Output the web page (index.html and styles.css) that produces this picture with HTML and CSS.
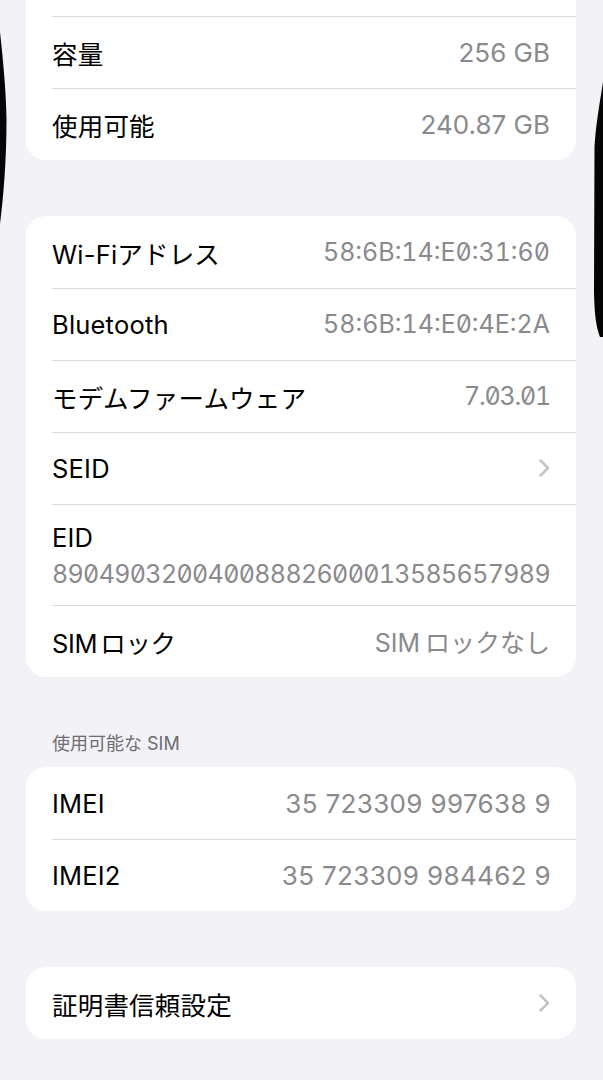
FILE: index.html
```html
<!DOCTYPE html>
<html lang="ja">
<head>
<meta charset="utf-8">
<title>情報</title>
<link rel="stylesheet" href="styles.css">
</head>
<body>
<div class="page">
  <section class="card card-top">
    <div class="top-cut"></div>
    <div class="row"><span class="label">容量</span><span class="value">256 GB</span></div>
    <div class="row"><span class="label">使用可能</span><span class="value">240.87 GB</span></div>
  </section>

  <section class="card">
    <div class="row"><span class="label">Wi-Fiアドレス</span><span class="value mono">58:6B:14:E0:31:60</span></div>
    <div class="row"><span class="label">Bluetooth</span><span class="value mono">58:6B:14:E0:4E:2A</span></div>
    <div class="row"><span class="label">モデムファームウェア</span><span class="value mono ver">7.03.01</span></div>
    <div class="row"><span class="label">SEID</span>
      <svg class="chev" width="13" height="20" viewBox="0 0 13 20"><path d="M2.5 2.5 L10 10 L2.5 17.5" fill="none" stroke="#c4c4c8" stroke-width="2.5" stroke-linecap="round" stroke-linejoin="round"/></svg>
    </div>
    <div class="row row-tall">
      <span class="label">EID</span>
      <span class="value eid">89049032004008882600013585657989</span>
    </div>
    <div class="row"><span class="label sim">SIM ロック</span><span class="value sim">SIM ロックなし</span></div>
  </section>

  <h2 class="section-head">使用可能な SIM</h2>
  <section class="card card-sim">
    <div class="row"><span class="label">IMEI</span><span class="value imei">35 723309 997638 9</span></div>
    <div class="row"><span class="label">IMEI2</span><span class="value imei">35 723309 984462 9</span></div>
  </section>

  <section class="card card-last">
    <div class="row"><span class="label">証明書信頼設定</span>
      <svg class="chev" width="13" height="20" viewBox="0 0 13 20"><path d="M2.5 2.5 L10 10 L2.5 17.5" fill="none" stroke="#c4c4c8" stroke-width="2.5" stroke-linecap="round" stroke-linejoin="round"/></svg>
    </div>
  </section>
</div>

<svg class="edge edge-left" width="12" height="240" viewBox="0 0 12 240"><path d="M0 32 C3 60 6 90 6.5 120 C6.5 160 3.5 195 0 224 Z" fill="#050505"/></svg>
<svg class="edge edge-right" width="14" height="260" viewBox="0 0 14 260"><path d="M14 0 C11 20 7 40 5.5 65 L5 210 C5.5 235 7.5 245 11 255 L14 255 Z" fill="#050505"/></svg>
</body>
</html>
```

FILE: styles.css
```css
html, body {
  margin: 0;
  padding: 0;
  background: #f2f2f7;
}
body {
  width: 603px;
  height: 1080px;
  overflow: hidden;
  position: relative;
  font-family: "Inter", "Noto Sans CJK JP", sans-serif;
  color: #000;
}
.page {
  padding: 0 27px 0 26px;
  display: flex;
  flex-direction: column;
}
.card {
  background: #fff;
  border-radius: 20px;
  margin-top: 56px;
  overflow: hidden;
}
.card-top {
  margin-top: 0;
  border-top-left-radius: 0;
  border-top-right-radius: 0;
}
.top-cut {
  height: 16px;
}
.row {
  height: 72px;
  display: flex;
  align-items: center;
  justify-content: space-between;
  padding: 0 26px;
  position: relative;
  box-sizing: border-box;
}
.row::before {
  content: "";
  position: absolute;
  left: 26px;
  right: 0;
  top: 0;
  border-top: 1px solid #dcdce0;
}
.card .row:first-child::before { display: none; }
.card-top .row::before { display: block; }
.label {
  font-size: 25.5px;
  letter-spacing: 0.2px;
}
.value {
  font-size: 26px;
  color: #8a8a8e;
}
.mono {
  font-size: 25px;
  font-feature-settings: "tnum", "zero";
}
.ver {
  letter-spacing: -1.2px;
}
.imei {
  letter-spacing: 0.35px;
  margin-right: -1px;
}
.label.sim {
  word-spacing: -4px;
  letter-spacing: -0.3px;
}
.value.sim {
  font-size: 25px;
  word-spacing: -2px;
  letter-spacing: 0;
}
.row-tall {
  height: 101px;
  flex-direction: column;
  align-items: flex-start;
  justify-content: center;
  padding-top: 2px;
}
.row-tall .label,
.row-tall .value {
  line-height: 36px;
}
.eid {
  font-size: 25px;
  font-feature-settings: "tnum", "zero";
  letter-spacing: -0.65px;
}
.chev {
  margin-right: -1px;
}
.section-head {
  margin: 54px 0 0 26px;
  font-size: 18px;
  font-weight: 400;
  color: #6d6d72;
  line-height: 26px;
}
.card-sim {
  margin-top: 10px;
}
.edge {
  position: absolute;
}
.edge-left {
  left: 0;
  top: 0;
}
.edge-right {
  right: 0;
  top: 82px;
}
```
